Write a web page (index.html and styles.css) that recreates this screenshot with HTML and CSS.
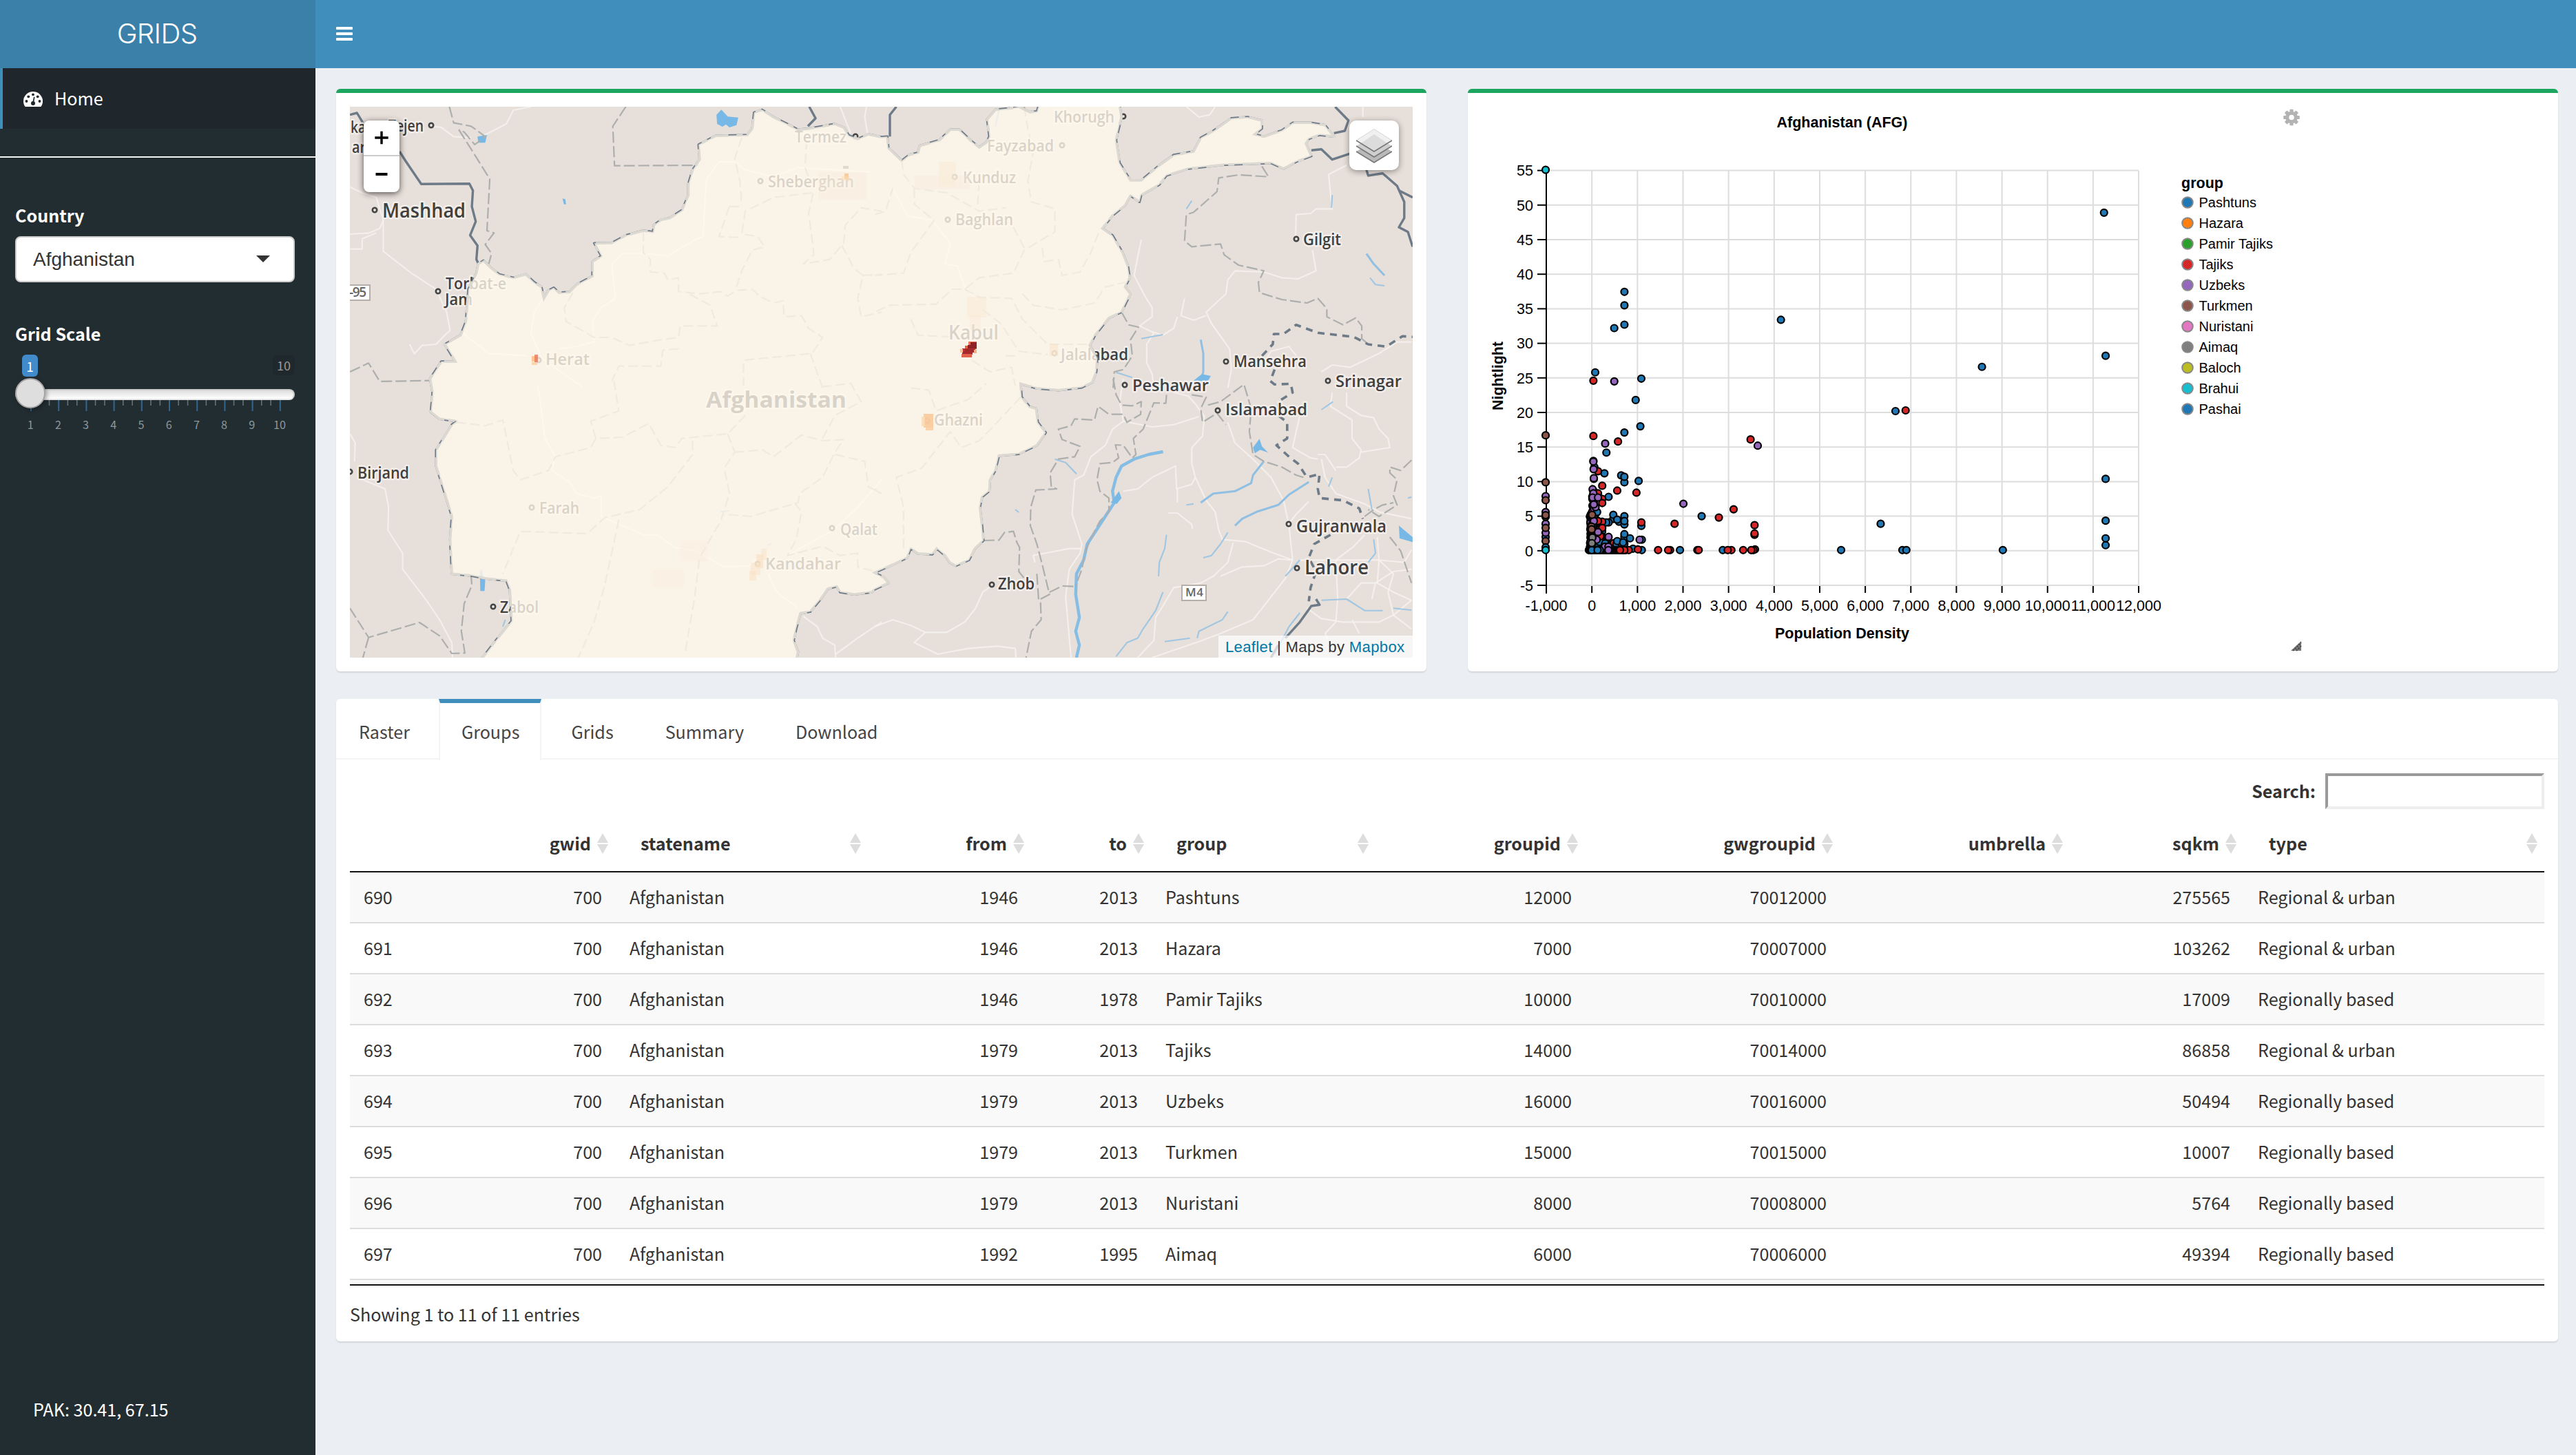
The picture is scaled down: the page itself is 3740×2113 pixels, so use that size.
FILE: index.html
```html
<!DOCTYPE html>
<html lang="en">
<head>
<meta charset="utf-8">
<title>GRIDS</title>
<link rel="stylesheet" href="styles.css">
</head>
<body>
<header class="topbar">
  <div class="logo">GRIDS</div>
  <nav class="navbar">
    <svg class="burger" viewBox="0 0 24 20"><rect width="24" height="4" rx="1"/><rect y="8" width="24" height="4" rx="1"/><rect y="16" width="24" height="4" rx="1"/></svg>
  </nav>
</header>
<div class="page">
  <aside class="sidebar">
    <a class="menu-item">
      <svg class="dash" viewBox="0 0 28 22"><path d="M14 0a14 14 0 0 0-14 14c0 2.900.8 5.500 2.200 7.500.3.300.6.500 1 .5h21.600c.4 0 .7-.2 1-.5A14 14 0 0 0 14 0z" fill="#fff"/><g fill="#1f282d"><circle cx="4.500" cy="14" r="1.900"/><circle cx="7.300" cy="7.300" r="1.900"/><circle cx="14" cy="4.300" r="1.900"/><circle cx="20.700" cy="7.300" r="1.900"/><circle cx="23.500" cy="14" r="1.900"/><circle cx="14" cy="17" r="3"/><path d="M13.200 16l1.800-8.300 1.600.4-1.600 8.300z"/></g></svg>
      <span>Home</span>
    </a>
    <hr class="rule">
    <label class="field-label">Country</label>
    <div class="select"><span>Afghanistan</span><i class="caret"></i></div>
    <label class="field-label scale-label">Grid Scale</label>
    <div class="slider">
      <div class="badges"><span class="badge-from">1</span><span class="badge-max">10</span></div>
      <div class="track"><i class="handle"></i></div>
      <svg class="ticks" viewBox="22 581 406 50" id="ticks"></svg>
    </div>
    <div class="coords">PAK: 30.41, 67.15</div>
  </aside>
  <main class="content">
    <div class="boxes">
      <section class="box">
        <div class="map">
          <svg class="map-canvas" id="map" viewBox="0 0 1543 800"></svg>
          <div class="zoom"><a><svg viewBox="0 0 20 20"><path d="M10 .8v18.400M.3 10h19.400" stroke="#000" stroke-width="3.400"/></svg></a><a><svg viewBox="0 0 20 20"><path d="M1.500 10h17" stroke="#000" stroke-width="4"/></svg></a></div>
          <div class="layers"><svg viewBox="0 0 52 50"><g stroke-width="1.500" stroke-linejoin="round"><path d="M0 33L26 49 52 33 26 18z" fill="#b9b9b9"/><path d="M0 33L26 49 52 33" fill="none" stroke="#777"/><path d="M0 25L26 41 52 25 26 10z" fill="#cfcfcf"/><path d="M0 25L26 41 52 25" fill="none" stroke="#777"/><path d="M0 17L26 33 52 17 26 .5z" fill="#f0f0f0" stroke="#ccc" stroke-width=".8"/><path d="M7 21L26 33 45 21 26 8z" fill="#dcdcdc"/><path d="M0 17L26 33 52 17" fill="none" stroke="#777"/></g></svg></div>
          <div class="attribution"><a>Leaflet</a> | Maps by <a>Mapbox</a></div>
        </div>
      </section>
      <section class="box">
        <svg class="chart" id="chart" viewBox="2131 135 1583 840"></svg>
      </section>
    </div>
    <section class="tabs-box">
      <ul class="tabs"><li>Raster</li><li class="active">Groups</li><li>Grids</li><li>Summary</li><li>Download</li></ul>
      <div class="tab-content">
        <div class="search"><label>Search:</label><input type="text"></div>
        <table class="grid">
          <colgroup><col style="width:385px"><col style="width:367px"><col style="width:237px"><col style="width:174px"><col style="width:326px"><col style="width:304px"><col style="width:370px"><col style="width:334px"><col style="width:252px"><col style="width:437px"></colgroup>
          <thead><tr><th class="r"><span>gwid</span></th><th>statename</th><th class="r">from</th><th class="r">to</th><th>group</th><th class="r">groupid</th><th class="r">gwgroupid</th><th class="r">umbrella</th><th class="r">sqkm</th><th>type</th></tr></thead>
          <tbody>
          <tr><td class="first"><span>690</span><span>700</span></td><td>Afghanistan</td><td class="r">1946</td><td class="r">2013</td><td>Pashtuns</td><td class="r">12000</td><td class="r">70012000</td><td></td><td class="r">275565</td><td>Regional &amp; urban</td></tr>
          <tr><td class="first"><span>691</span><span>700</span></td><td>Afghanistan</td><td class="r">1946</td><td class="r">2013</td><td>Hazara</td><td class="r">7000</td><td class="r">70007000</td><td></td><td class="r">103262</td><td>Regional &amp; urban</td></tr>
          <tr><td class="first"><span>692</span><span>700</span></td><td>Afghanistan</td><td class="r">1946</td><td class="r">1978</td><td>Pamir Tajiks</td><td class="r">10000</td><td class="r">70010000</td><td></td><td class="r">17009</td><td>Regionally based</td></tr>
          <tr><td class="first"><span>693</span><span>700</span></td><td>Afghanistan</td><td class="r">1979</td><td class="r">2013</td><td>Tajiks</td><td class="r">14000</td><td class="r">70014000</td><td></td><td class="r">86858</td><td>Regional &amp; urban</td></tr>
          <tr><td class="first"><span>694</span><span>700</span></td><td>Afghanistan</td><td class="r">1979</td><td class="r">2013</td><td>Uzbeks</td><td class="r">16000</td><td class="r">70016000</td><td></td><td class="r">50494</td><td>Regionally based</td></tr>
          <tr><td class="first"><span>695</span><span>700</span></td><td>Afghanistan</td><td class="r">1979</td><td class="r">2013</td><td>Turkmen</td><td class="r">15000</td><td class="r">70015000</td><td></td><td class="r">10007</td><td>Regionally based</td></tr>
          <tr><td class="first"><span>696</span><span>700</span></td><td>Afghanistan</td><td class="r">1979</td><td class="r">2013</td><td>Nuristani</td><td class="r">8000</td><td class="r">70008000</td><td></td><td class="r">5764</td><td>Regionally based</td></tr>
          <tr><td class="first"><span>697</span><span>700</span></td><td>Afghanistan</td><td class="r">1992</td><td class="r">1995</td><td>Aimaq</td><td class="r">6000</td><td class="r">70006000</td><td></td><td class="r">49394</td><td>Regionally based</td></tr>
          </tbody>
        </table>
        <div class="table-end"></div>
        <div class="info">Showing 1 to 11 of 11 entries</div>
      </div>
    </section>
  </main>
</div>
<script src="app.js"></script>
</body>
</html>
```
FILE: styles.css
```css
* { box-sizing: border-box; }
body { margin: 0; width: 3740px; height: 2113px; overflow: hidden; background: #ebeef3; color: #333; font: 25.100px/40px "Noto Sans CJK SC", "Noto Sans", sans-serif; }
.topbar { display: flex; height: 99px; }
.logo { width: 458px; padding-right: 2px; background: #3b80a9; color: #fff; font: 300 40px/98px Inter, "Liberation Sans", sans-serif; letter-spacing: -.6px; text-align: center; }
.navbar { flex: 1; background: #408ebb; padding: 39px 30px; }
.burger { display: block; width: 24px; height: 20px; fill: #fff; }
.page { display: flex; height: 2014px; }

.sidebar { width: 458px; background: #222d32; color: #fff; display: flex; flex-direction: column; }
.menu-item { display: flex; align-items: center; gap: 17px; height: 88px; padding: 0 0 2px 30px; border-left: 4px solid #408ebb; background: #1f272d; }
.dash { width: 28px; height: 22px; margin-top: 4px; }
.rule { width: 100%; height: 2px; margin: 40px 0 0; border: 0; background: #f4f4f4; }
.field-label { margin: 63px 0 0 22px; font-weight: 700; height: 40px; line-height: 40px; }
.select { margin: 11px 30px 0 22px; height: 67px; border: 2px solid #ccc; border-radius: 8px; background: #fff; color: #333; display: flex; justify-content: space-between; align-items: center; padding: 0 34px 0 24px; font: 28px/1 "Liberation Sans", sans-serif; }
.caret { border: 10px solid transparent; border-top-color: #333; border-bottom-width: 0; margin-top: -2px; }
.scale-label { margin-top: 54px; }
.slider { margin: 11px 30px 0 22px; }
.badges { display: flex; justify-content: space-between; height: 50px; font-size: 18px; line-height: 29px; }
.badge-from { margin-left: 10px; width: 23px; height: 32px; border-radius: 6px; background: #428bca; text-align: center; font-size: 19px; line-height: 33px; }
.badge-max { width: 32px; height: 29px; margin-top: 1px; border-radius: 6px; background: #1f282d; color: #999; text-align: center; }
.track { position: relative; height: 16px; border-radius: 8px; border: 2px solid #ccc; border-bottom-color: #e8e8e8; background: linear-gradient(#dedede, #fff); }
.handle { position: absolute; left: -2px; top: -18px; width: 44px; height: 44px; border-radius: 50%; background: #dedede; border: 2px solid #a5a5a5; box-shadow: 2px 2px 6px rgba(0,0,0,.35); }
.ticks { display: block; width: 406px; height: 50px; font-size: 16.200px; }
.coords { margin-top: auto; padding: 0 0 47px 48px; }

.content { flex: 1; padding: 30px 26px 0 30px; }
.boxes { display: grid; grid-template-columns: 1583px 1583px; gap: 60px; }
.box { height: 846px; background: #fff; border-top: 6px solid #1ba55f; border-radius: 6px; box-shadow: 0 2px 2px rgba(0,0,0,.1); }
.map { position: relative; margin: 20px; width: 1543px; height: 800px; overflow: hidden; background: #e7dfd9; }
.map-canvas { display: block; width: 1543px; height: 800px; font-family: "Open Sans", "Noto Sans", sans-serif; }
.zoom { position: absolute; left: 20px; top: 20px; width: 52px; border-radius: 8px; background: #fff; box-shadow: 0 2px 10px rgba(0,0,0,.65); }
.zoom a { display: flex; height: 52px; align-items: center; justify-content: center; }
.zoom a:first-child { border-bottom: 2px solid #ccc; }
.zoom svg { width: 20px; height: 20px; }
.layers { position: absolute; right: 20px; top: 20px; width: 72px; height: 72px; border-radius: 10px; background: #fff; box-shadow: 0 2px 10px rgba(0,0,0,.4); padding: 12px 10px; }
.layers svg { display: block; width: 52px; height: 50px; }
.attribution { position: absolute; right: 0; bottom: 0; width: 282px; height: 32px; padding-left: 10px; background: rgba(255,255,255,.7); font: 22.200px/33px "Liberation Sans", sans-serif; letter-spacing: .28px; white-space: nowrap; }
.attribution a { color: #0078a8; }
.chart { display: block; width: 1583px; height: 840px; font: 20px "Liberation Sans", sans-serif; }

.tabs-box { margin-top: 40px; height: 933px; background: #fff; border-radius: 6px; box-shadow: 0 2px 2px rgba(0,0,0,.1); }
.tabs { display: flex; gap: 10px; list-style: none; margin: 0; padding: 0; height: 88px; border-bottom: 2px solid #f4f4f4; color: #444; }
.tabs li { height: 89px; padding: 21px 30px 0 31px; border: solid transparent; border-width: 6px 2px 0; border-radius: 6px 0 0; }
.tabs .active { background: #fff; border-color: #408ebb #f4f4f4; border-radius: 0; }
.tab-content { padding: 20px; }
.search { display: flex; justify-content: flex-end; gap: 14px; height: 62px; font-weight: 700; }
.search label { line-height: 51px; }
.search input { width: 318px; height: 52px; border: 4px solid; border-color: #9a9a9a #eee #eee #9a9a9a; background: #fff; }
.grid { width: 3186px; table-layout: fixed; border-collapse: separate; border-spacing: 0; }
.grid th { height: 82px; padding: 0 35px 2px 37px; text-align: left; border-bottom: 2px solid #111; position: relative; }
.grid th::before, .grid th::after { content: ""; position: absolute; right: 10px; border: 8px solid transparent; }
.grid th::before { top: 25px; border-top-width: 0; border-bottom: 14px solid #ddd; }
.grid th::after { top: 41px; border-bottom-width: 0; border-top: 14px solid #ddd; }
.grid .r { text-align: right; }
.grid td { height: 74px; padding: 0 19px 2px 21px; border-top: 2px solid #ddd; white-space: nowrap; }
.grid tr:first-child td { height: 72px; border-top: 0; }
.grid tbody tr:nth-child(odd) { background: #f9f9f9; }
.grid .first { padding-left: 20px; }
.grid .first span:last-child { float: right; }
.table-end { height: 10px; border-top: 2px solid #ddd; border-bottom: 2px solid #111; background: #f9f9f9; }
.info { padding-top: 21px; }
```
FILE: app.js
```js
const NS = 'http://www.w3.org/2000/svg';
function add(parent, tag, attrs, text) {
  const el = document.createElementNS(NS, tag);
  for (const k in attrs) el.setAttribute(k, attrs[k]);
  if (text !== undefined) el.textContent = text;
  parent.appendChild(el);
  return el;
}

/* slider ticks */
const ticks = document.getElementById('ticks');
for (let i = 0; i < 28; i++) {
  const x = 45 + i * 40.2 / 3;
  const big = i % 3 === 0;
  if (i === 1) continue;
  add(ticks, 'rect', { x: x - 1, y: 581, width: big ? 2 : 1.5, height: big ? 16 : 8, fill: big ? '#33658f' : '#6b7478' });
  if (big) add(ticks, 'text', { x: x - 0.8, y: 623, 'text-anchor': 'middle', fill: '#8d979b' }, i / 3 + 1);
}

/* map: points are stored per quadrant and projected onto the canvas */
const map = document.getElementById('map');
const quad = {
  A: [1.96, -28, -35], B: [1.912, 762, -35], C: [1.96, -28, 395], D: [1.912, 762, 395]
};
function line(spec) {
  let q = quad.A;
  const out = [];
  spec.trim().split(/\s+/).forEach(t => {
    if (quad[t]) { q = quad[t]; return; }
    const [x, y] = t.split(',').map(Number);
    out.push((x / q[0] + q[1]).toFixed(1) + ' ' + (y / 3 + q[2]).toFixed(1));
  });
  return 'M' + out.join('L');
}
function draw(list, attrs) {
  list.forEach(s => add(map, 'path', Object.assign({ d: line(s), fill: 'none', 'stroke-linejoin': 'round' }, attrs)));
}
const country = `A 435,775 455,805 480,835 520,850 555,835 580,870 600,890 607,940 620,905 635,893 650,915 680,912 700,880 745,843 745,780 770,755 750,700 800,698 840,665 890,645 917,650 920,620 940,598 965,590 1000,555 1018,490 1018,440 1030,380 1050,335 1047,270 1095,232 1185,228 1200,200 1205,130 1228,118 1260,150 1300,180 1330,205 1360,200 1400,190 1435,180 1460,195 1475,230 1500,245 1530,225 1568,237
B 35,235 38,285 75,340 95,315 120,305 125,275 180,250 210,205 235,205 265,250 290,282 310,260 318,235 312,160 335,118 375,112 400,105 430,128 450,125 455,100 680,100 685,150 670,250 680,350 710,425 740,425 790,360 830,315 885,300 905,240 940,210 990,155 1035,150 1075,165 1075,200 1055,225 1080,235 1130,208 1160,175 1210,175 1250,185 1275,235 1235,228 1205,245 1197,265 1212,320 1170,345 1135,375 1100,350 970,358 870,375 810,405 790,445 740,490 735,520 710,492 695,535 660,580 632,635 660,665 688,740 703,800 708,850 695,890 710,920 685,1000 650,1025 612,1100 597,1145 618,1200 615,1260 605,1300
D 605,15 575,38 510,50 450,42 405,22 408,80 430,122 448,130 453,190 475,235 450,290 400,328 345,335 335,400 320,440 318,490 298,515 292,560 298,640 302,705 278,740 262,790 225,815 208,800 195,770 172,740 160,765 120,762 100,740 90,780 50,810 0,845 25,865 38,890 0,918
C 1540,930 1490,940 1450,930 1440,905 1415,915 1395,960 1365,1015 1337,1022 1325,1090 1318,1140 1330,1190 1325,1230 425,1230 470,1140 515,1055 510,920 500,880 440,870 400,858 345,850 340,700 345,600 325,500 300,380 300,310 325,250 345,200 358,185 310,175 285,145 290,60 283,0
A 315,1215 355,1215 325,1140 370,1100 385,1040 392,900 415,830 420,790 435,775`;

const roads = [
  'A 55,660 110,655 140,635 150,600 130,500 90,480 55,455', 'A 150,600 150,735 230,830 300,900 330,1000 340,1080 325,1100 300,1140 260,1145 238,1182 225,1140', 'A 90,725 90,680 130,655', 'A 55,725 90,725', 'A 430,235 500,180 520,120 570,105', 'A 290,190 315,195 350,235 400,240', 'A 1450,105 1480,220', 'A 1525,105 1520,150 1530,240',
  'C 55,240 70,280 68,360', 'C 75,430 155,480 165,560 163,660 205,760 205,830 270,960 310,1050 345,1150 347,1215',
  'C 1345,1035 1385,1080 1400,1130 1435,1160 1437,1215', 'C 1437,1200 1500,1130 1568,1060',
  'B 865,105 900,150 930,140 945,105', 'B 1355,105 1355,150', 'B 1310,360 1260,400 1265,480 1270,550 1225,550 1210,570 1170,575 1168,680', 'B 1215,730 1225,820 1175,855 1130,850 1080,825 1000,820 980,860 975,920 920,1000 935,1050 985,1160 990,1250 980,1330', 'B 740,685 730,760 720,840 750,930 770,980 770,1020 735,1060 775,1090 755,1140 755,1220 770,1270 775,1330', 'B 860,940 850,1015 885,1035 920,1015', 'B 840,1020 830,1070 800,1100 770,1085', 'B 1240,1260 1270,1230 1320,1240 1360,1210 1400,1180 1450,1130 1490,1130', 'B 1080,1220 1100,1170 1150,1150 1170,1190',
  'D 690,0 680,100 690,185 770,210 830,200 900,165', 'D 690,185 660,220 640,290 600,340 580,420 555,440 548,590 575,720 570,760 540,830 530,950 545,1215', 'D 830,60 870,75 890,110 915,165 910,250 880,300 880,370 890,430 920,530 945,580 955,660 965,700 1030,710 1100,755 1160,790', 'D 980,190 1000,280 1050,350 1100,430 1135,530 1150,640 1160,790', 'D 690,490 730,480 770,430 835,380 838,480 880,460 890,430', 'D 840,480 840,540', 'D 815,585 840,585 880,635 882,655', 'D 995,715 980,800 940,860 905,890', 'D 905,890 830,910 800,990 780,1040 775,1140 730,1215', 'D 770,1215 900,1145 960,1110 1050,1050 1100,950 1140,870 1160,790', 'D 960,860 1020,820 1080,815 1120,785 1160,790', 'D 445,800 440,770 540,740 575,740', 'D 0,1080 50,1050 100,1075 140,1105 200,1105 250,1060 280,1000 300,930 325,900', 'D 140,1105 110,1150 175,1200 260,1175 340,1165 390,1175 392,1215',
  'D 1180,160 1160,300 1210,345 1230,350', 'D 1270,60 1265,120 1325,180 1325,260 1350,310 1345,345 1310,385 1280,385', 'D 1310,60 1310,120 1350,160 1385,170 1400,220 1425,260 1430,300 1350,320', 'D 1230,330 1250,330 1280,400', 'D 1240,350 1250,430 1280,500 1360,545 1400,580 1490,610', 'D 1150,630 1170,590 1205,535', 'D 1180,790 1310,790 1400,790 1470,800 1490,745', 'D 1280,790 1330,730 1360,680', 'D 1280,790 1285,960 1280,1060 1250,1110 1260,1140', 'D 1200,1000 1240,1045 1300,1060 1400,1060 1440,1030 1490,965', 'D 1395,690 1400,790 1395,890 1440,930 1490,965', 'D 1310,960 1350,890 1390,890 1440,840 1490,830', 'D 1400,790 1440,850 1425,930 1440,1030 1490,1090', 'D 1325,1050 1345,1110', 'D 1380,960 1390,890'
];
draw(roads, { stroke: '#f6f2ee', 'stroke-width': 2.2, opacity: .85 });
draw([
  'A 720,1330 600,1200 570,1090 580,1000 605,940', 'A 375,1090 450,1180 560,1190', 'A 650,1160 700,1150 750,1130 745,1040 770,980 810,940 800,790 830,745 900,745 960,755 1030,690 1060,670 1065,520 1070,420 1105,345 1150,345 1180,380 1260,410 1330,370 1540,390', 'B 50,460 90,580 160,600 210,700 195,790 230,800 250,890 285,950',
  'C 590,30 610,260 640,340 630,400 680,450 700,500 750,520 770,510 770,600 830,640 890,680 930,680 980,735 1040,750 1120,820 1190,815 1215,780', 'C 1245,850 1270,930 1330,1000', 'C 1300,770 1430,660 1500,560 1568,440'
], { stroke: '#fff', 'stroke-width': 2, opacity: .7 });

const water = [
  'D 800,318 760,330 720,350 685,380 670,430 660,490 665,540 640,600 615,660 590,720 580,790 560,850 558,940 568,1040 558,1100 568,1160 560,1215', 'D 1080,360 1050,420 1045,455 1000,490 940,500 905,540', 'D 1205,450 1150,505 1120,550 1060,580 1020,610 1000,640', 'B 905,1120 912,1180 912,1260 905,1300', 'B 1365,745 1385,790 1415,840', 'B 1375,850 1390,880 1415,885', 'D 500,350 530,365 560,415', 'D 980,670 960,720 935,770 912,780', 'D 810,680 805,740 790,800 788,860', 'D 800,930 780,1010 745,1090 730,1130 700,1150 670,1210', 'D 980,1015 965,1050 900,1100 895,1130', 'D 875,1130 840,1138 805,1145', 'D 1180,1020 1150,1080 1110,1200', 'D 1370,480 1380,570', 'D 1385,700 1390,760 1370,800', 'D 1240,965 1310,960 1360,1010 1410,1010', 'D 1440,1000 1490,1008', 'D 1140,860 1180,790', 'B 1270,490 1268,545', 'B 880,515 865,550', 'B 800,1098 740,1115', 'B 670,1262 715,1285', 'D 1260,470 1270,430', 'D 1240,135 1272,100', 'D 390,570 400,582', 'D 865,550 885,545', 'D 1480,520 1490,515', 'C 430,830 433,925', 'C 497,1050 490,1080', 'B 345,120 335,190', 'C 1110,580 1135,575', 'C 1245,725 1255,718'
];
draw(water.slice(0, 5), { stroke: '#8fc0e4', 'stroke-width': 3 });
draw(water.slice(0, 1), { stroke: '#86bde5', 'stroke-width': 4.4 });
draw(water.slice(5), { stroke: '#9fc6e2', 'stroke-width': 2.1 });
draw([
  'A 1098,140 1112,118 1130,148 1160,152 1155,185 1135,195 1125,182 1115,192 1100,180', 'A 418,235 445,228 440,262 420,262', 'A 660,505 668,508 670,530 664,530', 'D 655,540 678,490 685,520 672,545', 'D 1455,640 1493,690 1493,712 1457,695', 'D 1050,300 1068,262 1075,295 1092,322 1070,310 1055,325', 'B 885,1298 908,1270 933,1278 925,1300', 'C 425,830 440,880 438,925 426,925'
], { fill: '#78b8e6' });

/* provincial and national borders */
draw([
  'A 338,105 350,175 400,190 440,235 410,270 380,215 365,205', 'A 365,205 400,290 453,420 445,645 465,655 440,705 458,745 450,790', 'A 840,105 803,190 808,362 1045,360', 'A 55,1260 108,1222 140,1302 283,1298',
  'C 55,1000 108,1127 253,1062 310,1120 345,1197 382,1195 372,1100 380,980 402,900 400,862', 'C 108,1127 92,1215',
  'B 1075,365 1093,410 1010,402 955,415 950,475 885,565 865,575 860,690 880,715 960,703 970,750 1010,795 1080,820 1065,870 1068,915 1130,945 1200,960 1230,940 1255,985 1255,1020 1300,1055 1335,1025 1352,1060 1352,1115 1370,1140', 'B 685,1000 705,1055 732,1065 710,1120 715,1190 690,1250 665,1260 662,1330',
  'D 662,0 670,70 685,115 715,118 740,100 738,155 700,190 690,155 650,155 620,120 610,180 555,175 545,205 510,220 520,265 570,295 555,340 510,350 487,410 490,470 505,480 447,485 433,560 432,640 450,720 465,810 485,940 460,960 462,1050 435,1100 420,1215', 'D 485,930 520,903 555,905', 'D 302,705 345,703 360,670 385,665 395,715 402,735 400,840 415,870', 'D 450,850 455,965', 'D 810,70 808,107 775,105 745,220 718,260 725,330 715,345 690,290 668,288 677,345 660,365 625,370 617,440 625,490 650,520 650,580 625,620 605,680 585,750 575,830 558,900', 'D 880,70 920,80 905,130 910,190 950,150 975,200', 'D 925,115 960,100 1025,25 1045,130 1040,230 1050,330 1080,360 1130,385 1170,420 1190,430', 'D 1490,355 1460,400 1430,385 1430,410 1450,440 1440,510 1450,550 1400,600 1370,570', 'D 1430,690 1460,750 1490,890', 'D 1360,600 1385,570 1410,550 1440,540'
], { stroke: '#adafae', 'stroke-width': 2.2, 'stroke-dasharray': '16 5' });
draw([
  'A 55,140 75,132 90,170 105,290', 'A 196,300 215,345 258,442 395,440 405,470 402,540 413,605 397,665 418,710 415,770 421,790', 'A 1362,105 1380,155 1358,190',
  'B 60,105 42,140 42,235', 'B 1278,105 1315,165 1305,210 1275,220', 'B 1212,295 1240,290 1270,335 1318,310', 'B 1365,380 1370,405 1410,395 1450,450 1470,520 1470,590 1455,630 1480,650 1493,715', 'B 1455,470 1493,500',
  'D 1225,960 1235,985 1212,990 1180,1060 1140,1130', 'D 1120,1160 1100,1215'
], { stroke: '#6d7a87', 'stroke-width': 3.4 });
draw([
  'B 1075,1190 1105,1140 1108,1095 1135,1095 1170,1055 1230,1090 1330,1108 1370,1140 1420,1150 1465,1105 1493,1108', 'B 1110,1250 1098,1300 1110,1315 1155,1312 D 1160,60 1120,100 1120,160 1145,190 1145,260 1115,290 1150,340 1175,370 1200,430 1235,415 1230,480 1235,520 1300,530 1345,565 1355,610', 'D 1265,680 1220,720 1205,780 1225,840 1210,910 1205,970'
], { stroke: '#6d7a87', 'stroke-width': 3.6, 'stroke-dasharray': '10 8' });
draw([
  'A 890,650 890,740 910,770 910,825 950,830 960,860 990,850 990,910 1050,920 1110,910 1130,930 1155,905 1200,900 1220,930 1260,960 1288,950 1290,1020 1340,1015 1360,1070 1400,1110 1370,1180 1200,1205 1175,1210 1175,1320', 'A 690,915 665,980 670,1040 750,1110 800,1110 850,1145 940,1120 990,1110 995,1060 1100,1060 1080,970 1020,920', 'A 990,1160 945,1165 940,1235 820,1235 800,1300', 'A 1370,480 1260,500 1180,560 1170,660 1215,670 1235,715 1200,730 1170,820 1155,890', 'A 1135,540 1170,540', 'A 1135,540 1105,670 1170,675', 'A 1355,250 1350,370 1375,470 1360,570 1370,680 1375,750 1345,790 1420,770 1460,700 1465,620 1510,545 1568,560', 'A 1455,710 1490,810 1515,840 1500,940 1510,1020 1568,1000', 'A 1515,840 1568,835', 'A 1170,240 1150,330 1165,430 1170,535', 'A 1365,1180 1400,1330',
  'B 75,340 80,400 110,460 200,480 290,560 365,545', 'B 110,460 110,530 165,600 100,740 80,830 0,840', 'B 415,105 425,200 440,300 425,430 435,520 500,550 500,650 415,730 385,830 290,850 250,900 215,900 170,965 40,970 0,1000', 'B 290,430 285,550', 'B 385,630 415,720', 'B 465,720 470,780 510,770 520,840 570,825 600,740 625,640', 'B 250,900 290,935 380,940 410,1030 480,1140 600,1140', 'B 410,920 440,970 520,990 610,960 640,890 695,870', 'B 100,1030 120,1100 230,1110', 'B 300,990 350,1050 400,1170 480,1185', 'B 390,1190 360,1190', 'B 270,1210 320,1260 380,1240 390,1320', 'B 0,575 30,560 50,460',
  'C 358,190 440,205 490,180 520,400 540,440 620,400 640,340 740,300 755,260 830,255 905,195 940,290 980,300 1000,260 1130,240 1180,160', 'C 755,260 740,185 820,140 805,0', 'C 1030,270 1030,330 960,470 880,570 780,605 730,675 540,665 490,850', 'C 820,615 780,900 750,1060 705,1215', 'C 1130,240 1150,320 1120,390 1135,500 1110,620 1050,780 1035,960 1008,1200', 'C 1150,320 1230,310 1260,340 1340,245 1400,270 1460,265 1435,320 1400,430 1335,500 1330,540 1195,600 1120,590', 'C 1400,260 1435,160 1510,100 1480,20 1400,35', 'C 1320,540 1340,580 1325,700 1300,770 1400,730 1450,770 1500,760 1500,820 1550,840', 'C 1435,330 1520,360 1530,470 1568,500', 'D 405,80 340,190 290,270 240,300 210,230 130,390 60,430 80,560 80,740', 'D 0,480 15,500', 'D 100,40 150,50 170,140 260,90 310,20'
], { stroke: '#b3b0ac', 'stroke-width': 2.2, 'stroke-dasharray': '14 6' });

/* place labels: text, x, baseline, width, size, weight, dot x, dot y */
const places = [
  ['Tejen', 56, 36, 51, 24, 600, 118, 27], ['ka', 1, 38, 22, 24, 600], ['ar', 3, 67, 20, 24, 600],
  ['Mashhad', 47, 161, 121, 28, 600, 36, 150], ['Torbat-e', 139, 265, 88, 24, 600, 128, 268], ['Jam', 138, 288, 40, 24, 600],
  ['Herat', 284, 375, 64, 24, 600, 274, 368], ['Sheberghan', 607, 117, 125, 24, 600, 596, 108], ['Termez', 646, 52, 75, 24, 600, 734, 43],
  ['Khorugh', 1022, 23, 88, 24, 600, 1123, 14], ['Fayzabad', 925, 65, 97, 24, 600, 1034, 56], ['Kunduz', 890, 111, 77, 24, 600, 878, 102],
  ['Baghlan', 879, 172, 84, 24, 600, 868, 164], ['Kabul', 869, 338, 73, 29, 600], ['Jalalabad', 1032, 368, 98, 24, 600, 1023, 358],
  ['Gilgit', 1384, 201, 55, 24, 600, 1374, 192], ['Mansehra', 1283, 378, 106, 24, 600, 1272, 370], ['Srinagar', 1431, 407, 96, 24, 600, 1420, 398],
  ['Peshawar', 1136, 413, 111, 24, 600, 1125, 404], ['Islamabad', 1271, 448, 119, 24, 600, 1260, 441], ['Ghazni', 848, 463, 71, 24, 600, 838, 456],
  ['Gujranwala', 1374, 618, 131, 25, 600, 1363, 606], ['Lahore', 1386, 679, 93, 29, 600, 1375, 670], ['Zhob', 941, 701, 53, 24, 600, 932, 694],
  ['Afghanistan', 517, 437, 204, 32, 700], ['Birjand', 11, 540, 75, 24, 600, 0, 530], ['Farah', 275, 591, 58, 24, 600, 264, 582],
  ['Qalat', 712, 622, 54, 24, 600, 700, 612], ['Kandahar', 603, 672, 110, 24, 600, 592, 664], ['Zabol', 218, 735, 56, 24, 600, 208, 726]
];
places.forEach(([t, x, y, w, s, wt, dx, dy]) => {
  add(map, 'text', { x, y, textLength: w, lengthAdjust: 'spacingAndGlyphs', 'font-size': s, 'font-weight': wt, fill: '#3f3f3f', stroke: '#f3eeea', 'stroke-width': 5, 'stroke-linejoin': 'round', 'paint-order': 'stroke' }, t);
  if (dx !== undefined) add(map, 'circle', { cx: dx, cy: dy, r: 3.2, fill: '#e8e4e0', stroke: '#444', 'stroke-width': 2.6 });
});
add(map, 'rect', { x: -4, y: 259, width: 33, height: 22, fill: '#fff', stroke: '#b5aea9', 'stroke-width': 2 });
add(map, 'text', { x: -1, y: 276, 'font-size': 19, 'font-weight': 600, fill: '#666', textLength: 25 }, '-95');
add(map, 'rect', { x: 1208, y: 695, width: 35, height: 22, fill: '#fff', stroke: '#b5aea9', 'stroke-width': 2 });
add(map, 'text', { x: 1213, y: 711, 'font-size': 17, 'font-weight': 600, fill: '#666', textLength: 26 }, 'M4');

/* population raster over the country */
const outline = line(country) + 'Z';
add(map, 'path', { d: outline, fill: 'none', stroke: '#6d7a87', 'stroke-width': 3.4, 'stroke-linejoin': 'round' });
add(map, 'path', { d: outline, fill: '#fff7eb', 'fill-opacity': .8 });
add(map, 'path', { d: outline, fill: 'none', stroke: '#dcd9d3', 'stroke-width': 3.6, 'stroke-dasharray': '26 12 9 6' });
[
  [680, 95, 70, 40, '#f9ead6', .3], [855, 80, 25, 36, '#fbe5cb', .3], [820, 100, 80, 20, '#f9ead6', .3], [718, 97, 6, 8, '#f9c48c', .8], [714, 101, 12, 6, '#fbdcb4', .5], [716, 86, 8, 4, '#d6cdc5', .7],
  [896, 276, 28, 30, '#fae7cf', .4], [900, 302, 16, 22, '#fbe8d4', .4], [1016, 344, 12, 18, '#fae3c8', .5],
  [264, 362, 8, 8, '#fbc690', 1], [268, 360, 5, 11, '#e9795b', .8], [264, 371, 8, 4, '#f9d6ad', 1],
  [833, 446, 14, 20, '#f9c695', .85], [830, 450, 5, 14, '#fbd9b2', .8], [836, 466, 11, 4, '#f9cfa5', .9],
  [590, 650, 10, 20, '#fbdcb6', .5], [582, 662, 14, 18, '#fae3c8', .5], [597, 642, 8, 16, '#fae3c8', .5], [580, 674, 10, 14, '#fae3c8', .6],
  [440, 672, 45, 26, '#faecd9', .25], [480, 630, 40, 30, '#faecd9', .25]
].forEach(([x, y, width, height, fill, opacity]) => add(map, 'rect', { x, y, width, height, fill, opacity }));
[
  [898, 341, 12, '#e8735d'], [901, 342, 9, '#8f2128'], [893, 347, 17, '#e2604a'], [897, 346, 13, '#8f2128'], [889, 351, 19, '#b8332f'], [893, 352, 13, '#a2272c'], [889, 355, 15, '#a8292c'], [888, 359, 15, '#e2604a'], [906, 353, 4, '#f4b08a'], [886, 352, 4, '#f7c29a']
].forEach(([x, y, width, fill]) => add(map, 'rect', { x, y, width, height: 5, fill }));

/* scatter chart */
const chart = document.getElementById('chart');
const X = v => 2311.2 + v * .066154, Y = v => 799.8 - v * 10.04;
for (let v = 0; v <= 12000; v += 1000) add(chart, 'path', { d: `M${X(v)} 248V850`, stroke: '#ddd', 'stroke-width': 2 });
for (let v = -5; v <= 55; v += 5) add(chart, 'path', { d: `M2245 ${Y(v)}H3105`, stroke: '#ddd', 'stroke-width': 2 });
add(chart, 'path', { d: 'M2245 248V862', stroke: '#000', 'stroke-width': 2 });
for (let v = -5; v <= 55; v += 5) {
  add(chart, 'path', { d: `M2232 ${Y(v)}H2245`, stroke: '#000', 'stroke-width': 2 });
  add(chart, 'text', { x: 2226, y: Y(v) + 7.8, 'text-anchor': 'end', 'font-size': 21.5 }, v);
}
for (let v = -1000; v <= 12000; v += 1000) {
  add(chart, 'path', { d: `M${X(v)} 851V861`, stroke: '#000', 'stroke-width': 2 });
  add(chart, 'text', { x: X(v), y: 887, 'text-anchor': 'middle', 'font-size': 21.5 }, v.toLocaleString('en-US'));
}
const bold = { 'font-weight': 700, 'text-anchor': 'middle', 'font-size': 22, lengthAdjust: 'spacingAndGlyphs' };
add(chart, 'text', Object.assign({ x: 2674.5, y: 185, textLength: 190 }, bold), 'Afghanistan (AFG)');
add(chart, 'text', Object.assign({ x: 2674.5, y: 926.5, textLength: 195 }, bold), 'Population Density');
add(chart, 'text', Object.assign({ transform: 'translate(2182 546) rotate(-90)', textLength: 100 }, bold), 'Nightlight');
add(chart, 'text', { x: 3167, y: 273, 'font-weight': 700, 'font-size': 21.5 }, 'group');
const col = { b: '#1f77b4', o: '#ff7f0e', g: '#2ca02c', r: '#d62728', p: '#9467bd', n: '#8c564b', k: '#e377c2', y: '#7f7f7f', l: '#bcbd22', c: '#17becf' };
[['Pashtuns', 'b'], ['Hazara', 'o'], ['Pamir Tajiks', 'g'], ['Tajiks', 'r'], ['Uzbeks', 'p'], ['Turkmen', 'n'], ['Nuristani', 'k'], ['Aimaq', 'y'], ['Baloch', 'l'], ['Brahui', 'c'], ['Pashai', 'b']].forEach(([t, c], i) => {
  add(chart, 'circle', { cx: 3176, cy: 294 + i * 30, r: 7.8, fill: col[c], stroke: '#888', 'stroke-width': 2 });
  add(chart, 'text', { x: 3192.5, y: 301 + i * 30, 'font-size': 20 }, t);
});
function dot(x, y, c) {
  add(chart, 'circle', { cx: X(x) - 1, cy: Y(y) - 1, r: 5, fill: col[c], stroke: '#000', 'stroke-width': 2.2 });
}
let seed = 7;
const rnd = () => (seed = (seed * 16807) % 2147483647) / 2147483647;
for (let i = 0; i < 190; i++) dot(-25 + rnd() * 110, Math.pow(rnd(), 1.2) * 5.4, 'bnppby'[i % 6]);
for (let i = 0; i < 16; i++) dot(20 + rnd() * 50, 5.4 + rnd() * 3.2, i % 3 ? 'p' : 'r');
for (let i = 0; i < 40; i++) dot(110 + rnd() * 150, .3 + rnd() * 3.6, 'rrpb'[i % 4]);
for (let i = 0; i < 30; i++) dot(260 + rnd() * 470, .2 + rnd() * .9, 'bbrp'[i % 4]);
for (let i = 0; i < 80; i++) dot(-50 + i * 6, 0, 'bprb'[i % 4]);
for (let i = 0; i < 16; i++) dot(430 + i * 22, 0, 'r');
const pts = {
  b: '1100,24.8 976,21.7 1079,17.9 728,17 334,14.1 70,12 290,11.1 728,9.8 658,10.8 728,10.6 1041,10 382,7.7 130,5.5 2424,4.9 1101,3.5 485,4.5 485,5.1 610,4.1 571,4.4 728,4.9 728,3.7 728,4.2 382,4 330,4 728,1.9 728,2.3 852,1.7 1111,1.5 571,1.3 728,.9 701,1.1 917,.2 1111,0 1948,0 2888,0 5485,0 729,37.35 729,35.4 729,32.6 506,32.1 4164,33.3 88,25.7 6678,20.1 6353,3.8 6830,0 6917,0 9034,0 11290,10.3 11290,4.25 11290,.7 11290,1.7 11255,48.8 11290,28.1 8576,26.5 -1000,1.9',
  r: '48,24.5 48,16.5 588,15.7 3498,16 150,11.4 242,9.3 571,8.6 993,8.3 150,8.2 242,7.4 242,6.8 3126,5.9 2802,4.7 1830,3.8 3585,3.6 3585,2.2 3585,2.4 1101,4 242,4.1 150,4.2 242,3.2 200,2 1468,0 1732,0 1689,0 2330,0 2359,0 3077,0 2996,0 3336,0 3595,.1 3560,0 3514,0 1025,.1 825,0 728,0 631,0 6901,20.2',
  p: '507,24.4 307,15.4 3655,15.1 48,12.9 48,12.8 53,11.7 58,10.3 58,10.4 31,8.8 48,8.2 31,7.6 150,7.6 96,6.2 58,6.6 2024,6.7 58,4.2 382,1.9 1063,1.5 150,2.6 120,1.5 300,.5 377,.5 377,0 -1000,7.8 -1000,5.5 -1000,3.8 -1000,2.5',
  n: '-1000,16.6 -1000,9.8 -1000,7.2 -1000,4.8 -1000,5.05 -1000,3.2 -1000,1.3 20,5.1 5,3.4 10,3',
  y: '26,1.8 15,1'
};
for (const c in pts) pts[c].split(' ').forEach(s => { const [x, y] = s.split(',').map(Number); dot(x, y, c); });
dot(-1000, .4, 'b'); dot(-1000, 0, 'c'); dot(-1000, 55, 'c'); dot(10, 0, 'b'); dot(190, 0, 'b'); dot(140, 0, 'b');

/* settings gear and resize grip */
const gear = add(chart, 'g', { transform: 'translate(3327 170.500)', fill: '#b3b3b3' });
for (let a = 0; a < 360; a += 45) add(gear, 'rect', { x: -2.6, y: -11.8, width: 5.2, height: 7, rx: 1, transform: `rotate(${a})` });
add(gear, 'circle', { r: 6.3, fill: 'none', stroke: '#b3b3b3', 'stroke-width': 5 });
add(chart, 'path', { d: 'M3326 945L3341 931V945Z', fill: '#777' });
add(chart, 'path', { d: 'M3329 945L3341 933M3334 945L3341 938', stroke: '#444', 'stroke-width': 2, 'stroke-dasharray': '2 2' });
```
